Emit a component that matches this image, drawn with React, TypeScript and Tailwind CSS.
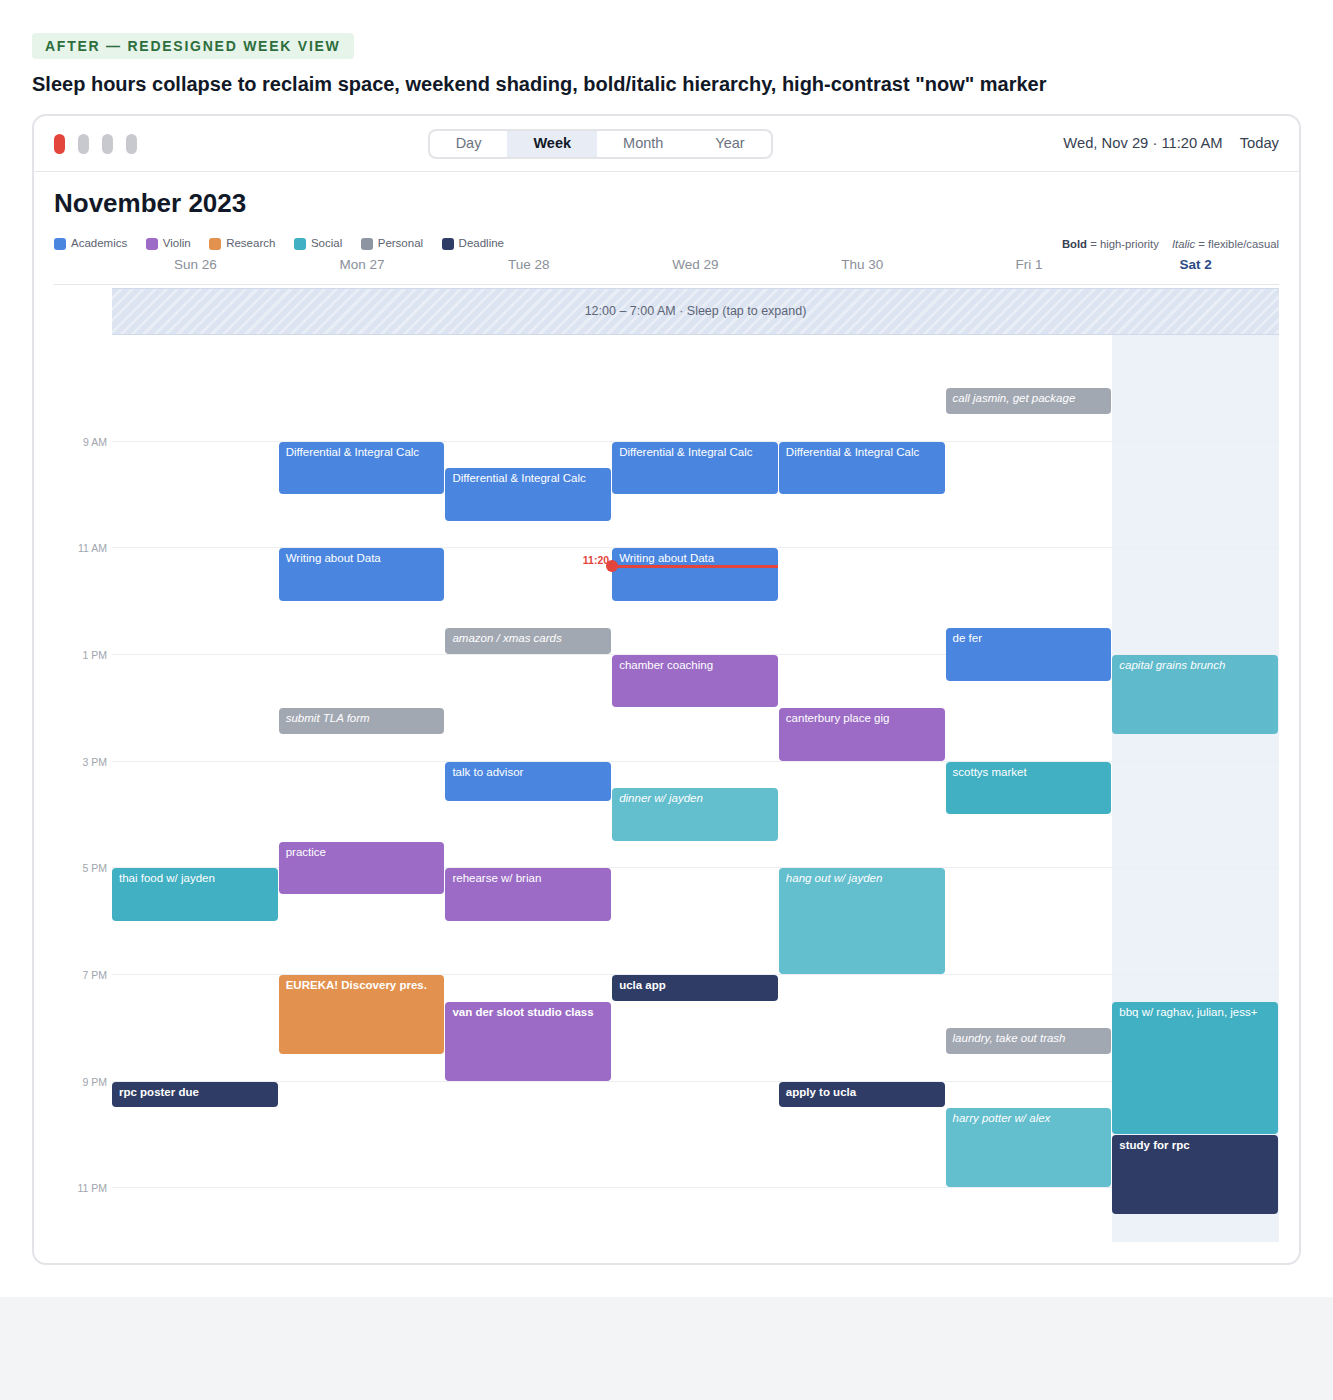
import type { CSSProperties } from "react";

type Kind = "academics" | "violin" | "research" | "social" | "personal" | "deadline";
type Weight = "bold" | "italic" | "normal";

type CalEvent = {
  day: number;
  start: number;
  end: number;
  title: string;
  kind: Kind;
  weight?: Weight;
};

const HOUR = 160 / 3;
const DAY_START = 7;
const DAY_END = 24;

const kindBg: Record<Kind, string> = {
  academics: "bg-[#4a86df]",
  violin: "bg-[#9b6bc6]",
  research: "bg-[#e2924e]",
  social: "bg-[#41b0c3]",
  personal: "bg-[#8e95a2]",
  deadline: "bg-[#2f3d66]",
};

const legend: { kind: Kind; label: string }[] = [
  { kind: "academics", label: "Academics" },
  { kind: "violin", label: "Violin" },
  { kind: "research", label: "Research" },
  { kind: "social", label: "Social" },
  { kind: "personal", label: "Personal" },
  { kind: "deadline", label: "Deadline" },
];

const days = ["Sun 26", "Mon 27", "Tue 28", "Wed 29", "Thu 30", "Fri 1", "Sat 2"];

const hourLabels = ["9 AM", "11 AM", "1 PM", "3 PM", "5 PM", "7 PM", "9 PM", "11 PM"];

const events: CalEvent[] = [
  { day: 0, start: 17, end: 18, title: "thai food w/ jayden", kind: "social" },
  { day: 0, start: 21, end: 21.5, title: "rpc poster due", kind: "deadline", weight: "bold" },

  { day: 1, start: 9, end: 10, title: "Differential & Integral Calc", kind: "academics" },
  { day: 1, start: 11, end: 12, title: "Writing about Data", kind: "academics" },
  { day: 1, start: 14, end: 14.5, title: "submit TLA form", kind: "personal", weight: "italic" },
  { day: 1, start: 16.5, end: 17.5, title: "practice", kind: "violin" },
  { day: 1, start: 19, end: 20.5, title: "EUREKA! Discovery pres.", kind: "research", weight: "bold" },

  { day: 2, start: 9.5, end: 10.5, title: "Differential & Integral Calc", kind: "academics" },
  { day: 2, start: 12.5, end: 13, title: "amazon / xmas cards", kind: "personal", weight: "italic" },
  { day: 2, start: 15, end: 15.75, title: "talk to advisor", kind: "academics" },
  { day: 2, start: 17, end: 18, title: "rehearse w/ brian", kind: "violin" },
  { day: 2, start: 19.5, end: 21, title: "van der sloot studio class", kind: "violin", weight: "bold" },

  { day: 3, start: 9, end: 10, title: "Differential & Integral Calc", kind: "academics" },
  { day: 3, start: 11, end: 12, title: "Writing about Data", kind: "academics" },
  { day: 3, start: 13, end: 14, title: "chamber coaching", kind: "violin" },
  { day: 3, start: 15.5, end: 16.5, title: "dinner w/ jayden", kind: "social", weight: "italic" },
  { day: 3, start: 19, end: 19.5, title: "ucla app", kind: "deadline", weight: "bold" },

  { day: 4, start: 9, end: 10, title: "Differential & Integral Calc", kind: "academics" },
  { day: 4, start: 14, end: 15, title: "canterbury place gig", kind: "violin" },
  { day: 4, start: 17, end: 19, title: "hang out w/ jayden", kind: "social", weight: "italic" },
  { day: 4, start: 21, end: 21.5, title: "apply to ucla", kind: "deadline", weight: "bold" },

  { day: 5, start: 8, end: 8.5, title: "call jasmin, get package", kind: "personal", weight: "italic" },
  { day: 5, start: 12.5, end: 13.5, title: "de fer", kind: "academics" },
  { day: 5, start: 15, end: 16, title: "scottys market", kind: "social" },
  { day: 5, start: 20, end: 20.5, title: "laundry, take out trash", kind: "personal", weight: "italic" },
  { day: 5, start: 21.5, end: 23, title: "harry potter w/ alex", kind: "social", weight: "italic" },

  { day: 6, start: 13, end: 14.5, title: "capital grains brunch", kind: "social", weight: "italic" },
  { day: 6, start: 19.5, end: 22, title: "bbq w/ raghav, julian, jess+", kind: "social" },
  { day: 6, start: 22, end: 23.5, title: "study for rpc", kind: "deadline", weight: "bold" },
];

function EventBlock({ ev }: { ev: CalEvent }) {
  const style: CSSProperties = {
    top: (ev.start - DAY_START) * HOUR,
    height: (ev.end - ev.start) * HOUR - 1,
  };
  const weight =
    ev.weight === "bold" ? "font-bold" : ev.weight === "italic" ? "italic opacity-[0.82]" : "";
  return (
    <div
      style={style}
      className={`absolute left-0 right-px overflow-hidden rounded-[4px] px-[7px] pt-[2px] text-[11.5px] leading-4 text-white ${kindBg[ev.kind]} ${weight}`}
    >
      {ev.title}
    </div>
  );
}

function NowMarker() {
  const top = Math.round((11 + 20 / 60 - DAY_START) * HOUR);
  return (
    <div className="pointer-events-none absolute left-0 right-0 z-10" style={{ top }}>
      <div className="absolute left-0 right-px top-[-1px] h-[3px] bg-[#e3443b]" />
      <div className="absolute left-[-6px] top-[-6px] h-3 w-3 rounded-full bg-[#e3443b]" />
      <span className="absolute right-[calc(100%+3px)] top-[-13px] text-[10.5px] font-bold text-[#e3443b]">
        11:20
      </span>
    </div>
  );
}

export default function App() {
  const bodyHeight = (DAY_END - DAY_START) * HOUR;

  return (
    <div className="min-h-[1400px] bg-[#f3f4f6] font-['Liberation_Sans',Arial,sans-serif]">
      <div className="bg-white p-8">
        <span className="mt-px inline-block rounded-[4px] bg-[#e6f4ea] px-[13px] py-[4px] text-[14px] font-bold leading-[18px] tracking-[0.125em] text-[#2d6e3c]">
          AFTER — REDESIGNED WEEK VIEW
        </span>
        <h1 className="mt-[13px] text-[20px] font-bold leading-6 text-[#111827]">
          Sleep hours collapse to reclaim space, weekend shading, bold/italic hierarchy, high-contrast "now" marker
        </h1>

        <div className="mt-[18px] rounded-[14px] border-2 border-[#e2e4e8] bg-white">
          {/* toolbar */}
          <div className="flex h-[56px] items-center justify-between border-b border-[#e5e7eb] px-5">
            <div className="flex gap-[13px]">
              <span className="h-5 w-[11px] rounded-full bg-[#e3443b]" />
              <span className="h-5 w-[11px] rounded-full bg-[#c8c9cf]" />
              <span className="h-5 w-[11px] rounded-full bg-[#c8c9cf]" />
              <span className="h-5 w-[11px] rounded-full bg-[#c8c9cf]" />
            </div>
            <div className="flex h-[30px] overflow-hidden rounded-lg border-2 border-[#e2e4e8] text-[14.5px] text-[#6b7280]">
              <span className="flex items-center px-[26px]">Day</span>
              <span className="flex items-center bg-[#e8edf5] px-[26px] font-bold text-[#111827]">Week</span>
              <span className="flex items-center px-[26px]">Month</span>
              <span className="flex items-center px-[26px]">Year</span>
            </div>
            <div className="flex gap-[17px] text-[14.75px] text-[#374151]">
              <span>Wed, Nov 29 · 11:20 AM</span>
              <span>Today</span>
            </div>
          </div>

          <div className="px-5 pb-[21px] pt-[15px]">
            <h2 className="text-[26px] font-bold leading-8 text-[#111827]">November 2023</h2>

            <div className="mt-[17px] flex h-4 items-center justify-between text-[11.5px] text-[#5b6270]">
              <div className="flex items-center gap-[18.5px]">
                {legend.map((l) => (
                  <span key={l.label} className="flex items-center gap-[5px]">
                    <span className={`h-3 w-3 rounded-[3px] ${kindBg[l.kind]}`} />
                    {l.label}
                  </span>
                ))}
              </div>
              <div className="flex gap-[13px] text-[11.3px]">
                <span>
                  <b className="text-[#374151]">Bold</b> = high-priority
                </span>
                <span>
                  <i>Italic</i> = flexible/casual
                </span>
              </div>
            </div>

            {/* day headers */}
            <div className="mt-[3px] grid grid-cols-[58px_repeat(7,1fr)] border-b border-[#e5e7eb] pb-[9px] text-[13.5px] leading-5 text-[#8a8f99]">
              <div />
              {days.map((d, i) => (
                <div key={d} className={`text-center ${i === 6 ? "font-bold text-[#2c4a86]" : ""}`}>
                  {d}
                </div>
              ))}
            </div>

            {/* sleep band */}
            <div className="mt-[3px] grid grid-cols-[58px_1fr]">
              <div />
              <div className="flex h-[47px] items-center justify-center border-y border-[#d0d9e9] bg-[repeating-linear-gradient(135deg,#dde4f1_0px,#dde4f1_5px,#e8edf6_5px,#e8edf6_8px)] text-[12.5px] text-[#5b6476]">
                12:00 – 7:00 AM · Sleep (tap to expand)
              </div>
            </div>

            {/* body */}
            <div className="grid" style={{ height: bodyHeight }}>
              {/* weekend shading */}
              <div className="grid grid-cols-[58px_repeat(7,1fr)] [grid-area:1/1]">
                <div className="col-start-8 bg-[#edf1f8]" />
              </div>

              {/* hour lines */}
              <div className="flex flex-col [grid-area:1/1]">
                {hourLabels.map((label) => (
                  <div key={label} className="flex h-[106.667px] items-end">
                    <span className="w-[58px] translate-y-1/2 pr-[5px] text-right text-[10.5px] leading-3 text-[#a0a5ae]">
                      {label}
                    </span>
                    <div className="flex-1 border-b border-[#eceef1]" />
                  </div>
                ))}
              </div>

              {/* events */}
              <div className="grid grid-cols-[58px_repeat(7,1fr)] [grid-area:1/1]">
                <div />
                {days.map((d, i) => (
                  <div key={d} className="relative">
                    {events
                      .filter((e) => e.day === i)
                      .map((e) => (
                        <EventBlock key={e.title + e.start} ev={e} />
                      ))}
                    {i === 3 && <NowMarker />}
                  </div>
                ))}
              </div>
            </div>
          </div>
        </div>
      </div>
    </div>
  );
}
